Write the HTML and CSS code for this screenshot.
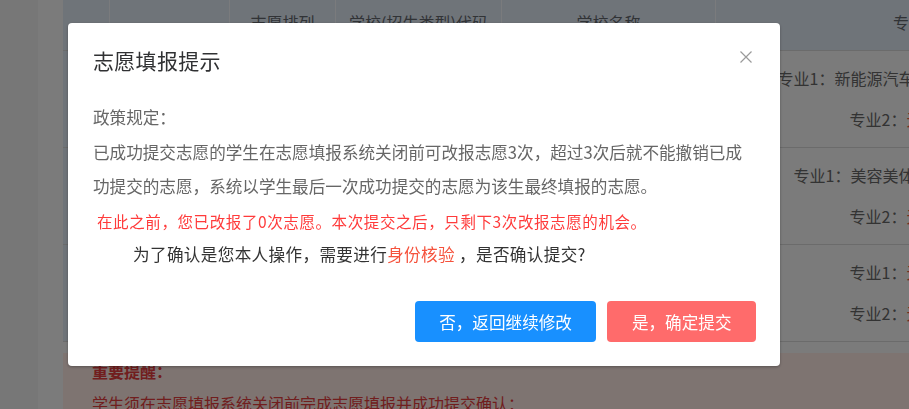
FILE: index.html
```html
<!DOCTYPE html>
<html lang="zh-CN">
<head>
<meta charset="utf-8">
<title>志愿填报提示</title>
<link rel="stylesheet" href="styles.css">
</head>
<body>
<div class="page">
  <div class="sidebar"></div>
  <div class="band"></div>
  <div class="main">
    <div class="table">
      <div class="thead">
        <div class="th"></div>
        <div class="th"></div>
        <div class="th">志愿排列</div>
        <div class="th">学校(招生类型)代码</div>
        <div class="th">学校名称</div>
        <div class="th th-last">专业志愿</div>
      </div>
      <div class="tr">
        <div class="td td-first"></div>
        <div class="td"></div>
        <div class="td"></div>
        <div class="td"></div>
        <div class="td"></div>
        <div class="td td-last">
          <div class="line">专业1：新能源汽车制造与检测</div>
          <div class="line">专业2：<span class="val">无</span></div>
        </div>
      </div>
      <div class="tr">
        <div class="td td-first"></div>
        <div class="td"></div>
        <div class="td"></div>
        <div class="td"></div>
        <div class="td"></div>
        <div class="td td-last">
          <div class="line">专业1：美容美体艺术设计</div>
          <div class="line">专业2：<span class="val">无</span></div>
        </div>
      </div>
      <div class="tr">
        <div class="td td-first"></div>
        <div class="td"></div>
        <div class="td"></div>
        <div class="td"></div>
        <div class="td"></div>
        <div class="td td-last">
          <div class="line">专业1：<span class="val">无</span></div>
          <div class="line">专业2：<span class="val">无</span></div>
        </div>
      </div>
    </div>
    <div class="notice">
      <p class="notice-title">重要提醒：</p>
      <p class="notice-text">学生须在志愿填报系统关闭前完成志愿填报并成功提交确认：</p>
    </div>
  </div>
</div>

<div class="overlay">
  <div class="dialog">
    <div class="dialog-header">
      <span class="dialog-title">志愿填报提示</span>
      <span class="dialog-close">
        <svg width="12" height="12" viewBox="0 0 12 12"><path d="M0.5 0.5 L11.5 11.5 M11.5 0.5 L0.5 11.5" stroke="#9a9a9a" stroke-width="1.2" fill="none"/></svg>
      </span>
    </div>
    <div class="dialog-body">
      <p class="policy">政策规定：</p>
      <p class="policy">已成功提交志愿的学生在志愿填报系统关闭前可改报志愿3次，超过3次后就不能撤销已成功提交的志愿，系统以学生最后一次成功提交的志愿为该生最终填报的志愿。</p>
      <p class="warn">在此之前，您已改报了0次志愿。本次提交之后，只剩下3次改报志愿的机会。</p>
      <p class="confirm">为了确认是您本人操作，需要进行<span class="hl">身份核验</span> ，是否确认提交?</p>
    </div>
    <div class="dialog-footer">
      <button class="btn btn-blue">否，返回继续修改</button>
      <button class="btn btn-red">是，确定提交</button>
    </div>
  </div>
</div>
</body>
</html>
```

FILE: styles.css
```css
html, body {
  margin: 0;
  padding: 0;
}

body {
  width: 909px;
  height: 409px;
  overflow: hidden;
  background: #eeeeee;
  font-family: "Noto Sans CJK SC", "Noto Sans", sans-serif;
  color: #666;
}

.page {
  display: flex;
  height: 409px;
  overflow: hidden;
}

.sidebar {
  width: 38px;
  flex: none;
  background: #eeeeee;
}

.band {
  width: 25px;
  flex: none;
  background: #f6f6f6;
}

.main {
  flex: 1;
  min-width: 0;
  overflow: hidden;
  background: #f6f6f6;
}

.table {
  display: flex;
  flex-direction: column;
}

.thead,
.tr {
  display: grid;
  grid-template-columns: 47px 120px 106px 166px 214px 420px;
}

.thead {
  height: 50px;
  background: #dfe8f3;
}

.th {
  border-right: 1px solid #f4f7fb;
  font-size: 16px;
  line-height: 20px;
  padding-top: 12px;
  text-align: center;
  color: #62676d;
  white-space: nowrap;
  overflow: hidden;
}

.th-last {
  padding-left: 177px;
  text-align: left;
}

.tr {
  height: 96px;
  border-top: 1px solid #d6d6d6;
  background: #f7f7f7;
}

.td {
  display: flex;
  align-items: center;
  justify-content: center;
  font-size: 16px;
  color: #666;
  white-space: nowrap;
  overflow: hidden;
}

.td-first {
  background: #dfe8f3;
}

.td-last {
  flex-direction: column;
  padding-right: 80px;
}

.line {
  line-height: 41px;
}

.val {
  color: #e6553a;
}

.tr:last-child {
  border-bottom: 1px solid #d6d6d6;
}

.notice {
  margin-top: 11px;
  background: #fde8e3;
  padding: 6px 29px 0;
  height: 80px;
  color: #e23c3c;
  font-size: 16px;
}

.notice p {
  margin: 0;
  line-height: 24px;
  white-space: nowrap;
}

.notice-title {
  font-weight: bold;
}

.notice-text {
  margin-top: 8px !important;
}

/* overlay + dialog */
.overlay {
  position: fixed;
  inset: 0;
  background: rgba(0, 0, 0, 0.5);
  display: flex;
  align-items: flex-start;
  padding: 23px 0 0 68px;
  box-sizing: border-box;
}

.dialog {
  width: 712px;
  height: 343px;
  box-sizing: border-box;
  background: #fff;
  border-radius: 4px;
  box-shadow: 0 1px 3px rgba(0, 0, 0, 0.3);
  display: flex;
  flex-direction: column;
}

.dialog-header {
  display: flex;
  justify-content: space-between;
  align-items: center;
  padding: 20px 28px 0 25px;
}

.dialog-title {
  font-size: 21px;
  line-height: 34px;
  color: #303133;
  letter-spacing: 0.3px;
}

.dialog-close {
  display: flex;
  margin-top: -6px;
}

.dialog-body {
  padding: 23px 30px 0 25px;
}

.dialog-body p {
  margin: 0;
}

.policy {
  font-size: 16.6px;
  line-height: 34.5px;
  color: #666;
}

.warn {
  font-size: 15.5px;
  line-height: 34px;
  color: #ff3b3b;
  padding-left: 4px;
  letter-spacing: 0.6px;
  white-space: nowrap;
}

.confirm {
  font-size: 16.6px;
  line-height: 32px;
  color: #333;
  padding-left: 40px;
  letter-spacing: 0.35px;
  white-space: nowrap;
}

.hl {
  color: #f5523c;
}

.dialog-footer {
  margin-top: auto;
  display: flex;
  justify-content: flex-end;
  gap: 11px;
  padding: 0 24px 24px;
}

.btn {
  height: 41px;
  padding: 0 24.5px;
  border: none;
  border-radius: 4px;
  font-family: "Noto Sans CJK SC", "Noto Sans", sans-serif;
  font-size: 16.6px;
  color: #fff;
  cursor: pointer;
}

.btn-blue {
  background: #1890ff;
}

.btn-red {
  background: #ff6b6b;
}
```
